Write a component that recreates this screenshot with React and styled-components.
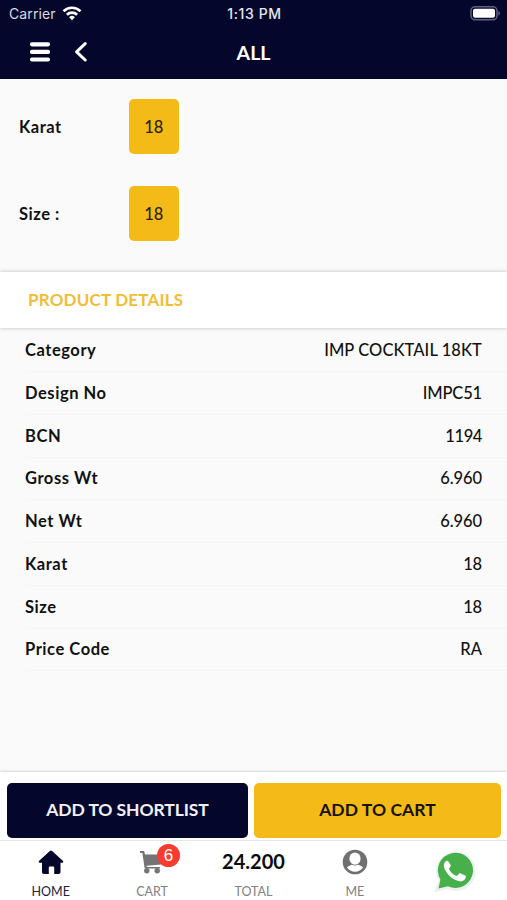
import React from 'react';
import styled, { createGlobalStyle } from 'styled-components';

const details = [
  { label: 'Category', value: 'IMP COCKTAIL 18KT', spacing: '0.08px' },
  { label: 'Design No', value: 'IMPC51', spacing: '-0.15px' },
  { label: 'BCN', value: '1194', spacing: '-0.4px' },
  { label: 'Gross Wt', value: '6.960', spacing: '-0.1px' },
  { label: 'Net Wt', value: '6.960', spacing: '-0.1px' },
  { label: 'Karat', value: '18', spacing: '-0.2px' },
  { label: 'Size', value: '18', spacing: '-0.2px' },
  { label: 'Price Code', value: 'RA' },
];

const options = [
  { label: 'Karat', value: '18' },
  { label: 'Size :', value: '18' },
];

const WifiIcon = () => (
  <svg width="20" height="15" viewBox="0 0 20 15" fill="none" stroke="#fff" strokeWidth="2.7">
    <path d="M1.5 5.2a12.2 12.2 0 0 1 17 0" />
    <path d="M4.9 8.7a7.3 7.3 0 0 1 10.2 0" />
    <path d="M10 14.2l-2.9-2.9a4.1 4.1 0 0 1 5.8 0z" fill="#fff" stroke="none" />
  </svg>
);

const BatteryIcon = () => (
  <svg width="31" height="15" viewBox="0 0 31 15">
    <rect x="1" y="0.8" width="26" height="13" rx="4" fill="none" stroke="#5f6180" strokeWidth="1.5" />
    <rect x="3" y="2.8" width="22" height="9" rx="2" fill="#fff" />
    <path d="M28.4 5v4.6c1-.4 1.6-1.3 1.6-2.3s-.6-1.9-1.6-2.3z" fill="#5f6180" />
  </svg>
);

const MenuIcon = () => (
  <svg width="20" height="21" viewBox="0 0 20 21" fill="#fff">
    <rect x="0" y="0.2" width="20" height="4.2" rx="1.8" />
    <rect x="0" y="7.8" width="20" height="4.2" rx="1.8" />
    <rect x="0" y="15.4" width="20" height="4.2" rx="1.8" />
  </svg>
);

const BackIcon = () => (
  <svg width="14" height="21" viewBox="0 0 14 21" fill="none" stroke="#fff" strokeWidth="3" strokeLinecap="round" strokeLinejoin="round">
    <path d="M11.2 1.6L2.6 9.8L11.2 18" />
  </svg>
);

const HomeIcon = () => (
  <svg width="26" height="25" viewBox="0 0 26 25" fill="#04072b">
    <path d="M11.9 1a1.7 1.7 0 0 1 2.2 0L24.8 10.7c.9.9.6 2-.5 2H22.500v9.300c0 1.300-.8 2-2 2h-4.300v-6.300c0-.8-.4-1.200-1.200-1.200h-3c-.8 0-1.200.4-1.200 1.200V24H6c-1.200 0-2-.7-2-2v-9.300H1.700c-1.100 0-1.400-1.100-.5-2z" />
  </svg>
);

const CartIcon = () => (
  <svg width="24" height="24" viewBox="0 0 24 24" fill="#747474">
    <path d="M0 1h3c.9 0 1.3.4 1.5 1.2L5 4.4h17.500L21 14.500 6.500 15.800l.4 1.200H20v1.500H5.600c-.6 0-1-.3-1.100-.9L2.400 3H0z" />
    <circle cx="6.8" cy="20.7" r="2.7" />
    <circle cx="17.2" cy="20.7" r="2.7" />
  </svg>
);

const ProfileIcon = () => (
  <svg width="26" height="26" viewBox="0 0 26 26">
    <circle cx="13" cy="13" r="12.3" fill="#707070" />
    <ellipse cx="13" cy="9.600" rx="5.600" ry="6.200" fill="#fff" />
    <path d="M4.900 18.200c1.600-1.300 3.200-2 5-2.500 1.900 1 4.300 1 6.200 0 1.800.5 3.400 1.200 5 2.500-1.900 2.900-4.700 4.500-8.100 4.500s-6.200-1.600-8.100-4.500z" fill="#fff" />
  </svg>
);

const WhatsappIcon = () => (
  <svg width="42" height="42" viewBox="0 0 42 42">
    <path d="M.5 41.500L4.300 29.500A19.800 19.800 0 1 1 13 38z" fill="#edf0f2" />
    <path d="M4.500 37.500L6.400 28.500A17.600 17.600 0 1 1 14 35.300z" fill="#48b04b" />
    <path d="M14.700 10.900c-.6-1-1.500-1.300-2.300-.8-3 1.700-3.200 5.200-1.400 8.700 3 5.800 7.700 9.700 13.400 11.300 3.700 1 6.600-.5 7.400-3.800.2-.9 0-1.400-.8-1.800l-4.200-2.100c-.9-.4-1.400-.3-2 .4l-1.300 1.600c-.4.5-.8.6-1.500.3-3-1.300-5.300-3.500-6.800-6.300-.3-.6-.2-.9.2-1.400l1.100-1.400c.4-.5.4-1 .1-1.600z" fill="#fff" />
  </svg>
);

const App = () => {
  return (
    <Screen>
      <GlobalStyle />
      <Header>
        <StatusBar>
          <Carrier>
            <span>Carrier</span>
            <WifiIcon />
          </Carrier>
          <Clock>1:13 PM</Clock>
          <Battery>
            <BatteryIcon />
          </Battery>
        </StatusBar>
        <NavBar>
          <NavActions>
            <IconButton aria-label="Menu"><MenuIcon /></IconButton>
            <IconButton aria-label="Back"><BackIcon /></IconButton>
          </NavActions>
          <Title>ALL</Title>
        </NavBar>
      </Header>

      <Content>
        <Options>
          {options.map((option) => (
            <OptionRow key={option.label}>
              <OptionLabel>{option.label}</OptionLabel>
              <OptionValue>{option.value}</OptionValue>
            </OptionRow>
          ))}
        </Options>

        <SectionTitle>PRODUCT DETAILS</SectionTitle>

        <DetailList>
          {details.map((item) => (
            <DetailRow key={item.label}>
              <DetailLabel>{item.label}</DetailLabel>
              <DetailValue $spacing={item.spacing}>{item.value}</DetailValue>
            </DetailRow>
          ))}
        </DetailList>
      </Content>

      <Actions>
        <ActionButton>ADD TO SHORTLIST</ActionButton>
        <ActionButton $accent>ADD TO CART</ActionButton>
      </Actions>

      <TabBar>
        <Tab $active>
          <TabIcon><HomeIcon /></TabIcon>
          <TabLabel>HOME</TabLabel>
        </Tab>
        <Tab>
          <TabIcon>
            <CartIcon />
            <Badge>6</Badge>
          </TabIcon>
          <TabLabel>CART</TabLabel>
        </Tab>
        <Tab>
          <Total>24.200</Total>
          <TabLabel>TOTAL</TabLabel>
        </Tab>
        <Tab>
          <TabIcon><ProfileIcon /></TabIcon>
          <TabLabel>ME</TabLabel>
        </Tab>
        <ChatTab>
          <WhatsappIcon />
        </ChatTab>
      </TabBar>
    </Screen>
  );
};

// Styled Components
const GlobalStyle = createGlobalStyle`
  * {
    box-sizing: border-box;
  }

  body {
    margin: 0;
    overflow: hidden;
  }

  svg {
    display: block;
    flex-shrink: 0;
  }
`;

const Screen = styled.div`
  width: 507px;
  height: 900px;
  display: flex;
  flex-direction: column;
  background-color: #fafafa;
  color: #111;
  font-family: Lato, sans-serif;
`;

const Header = styled.header`
  height: 79px;
  background-color: #04072b;
  color: #fff;
`;

const StatusBar = styled.div`
  height: 27px;
  padding: 0 6px 0 9px;
  display: grid;
  grid-template-columns: 1fr auto 1fr;
  align-items: center;
  font-family: Inter, sans-serif;
  font-size: 14px;
`;

const Carrier = styled.div`
  display: flex;
  align-items: center;
  gap: 6px;
  color: #d9dae2;
  letter-spacing: 0.1px;
`;

const Clock = styled.div`
  margin-left: -1px;
  font-size: 14px;
  font-weight: 500;
  letter-spacing: 0.6px;
  color: #e6e7ee;
`;

const Battery = styled.div`
  display: flex;
  justify-content: flex-end;
`;

const NavBar = styled.div`
  height: 52px;
  padding: 0 30px 2px;
  display: grid;
  grid-template-columns: 1fr auto 1fr;
  align-items: center;
`;

const NavActions = styled.div`
  display: flex;
  gap: 24px;
`;

const IconButton = styled.button`
  padding: 0;
  border: none;
  background: none;
`;

const Title = styled.h1`
  margin: 0;
  font-size: 19.5px;
  font-weight: 700;
`;

const Content = styled.main`
  flex: 1;
`;

const Options = styled.div`
  height: 193px;
  padding: 20px 19px 0;
  display: flex;
  flex-direction: column;
  gap: 32px;
`;

const OptionRow = styled.div`
  display: flex;
  align-items: center;
`;

const OptionLabel = styled.span`
  width: 110px;
  font-size: 16.5px;
  font-weight: 700;
  letter-spacing: 0.5px;
`;

const OptionValue = styled.button`
  width: 49.5px;
  height: 55px;
  padding: 0;
  border: none;
  border-radius: 5px;
  background-color: #f4ba18;
  color: #2b220a;
  font-family: inherit;
  font-size: 16.5px;
  font-weight: 500;
`;

const SectionTitle = styled.h2`
  height: 56px;
  margin: 0;
  padding: 0 0 2px 28px;
  display: flex;
  align-items: center;
  background-color: #fff;
  box-shadow: 0 0 4px rgba(0, 0, 0, 0.25);
  color: #f2bd35;
  font-size: 17px;
  font-weight: 700;
  letter-spacing: 0.2px;
`;

const DetailList = styled.div`
  padding: 1.3px 0 0 25px;
`;

const DetailRow = styled.div`
  height: 42.75px;
  padding-right: 25px;
  display: flex;
  align-items: center;
  justify-content: space-between;
  border-bottom: 1px solid #f6f6f6;
`;

const DetailLabel = styled.span`
  font-size: 16.5px;
  font-weight: 700;
  letter-spacing: 0.55px;
`;

const DetailValue = styled.span`
  font-size: 16.5px;
  font-weight: 500;
  letter-spacing: ${props => props.$spacing || 'normal'};
`;

const Actions = styled.div`
  height: 68px;
  padding: 11px 6px 0 7px;
  display: flex;
  gap: 6px;
  background-color: #fff;
  box-shadow: 0 0 3px rgba(0, 0, 0, 0.25);
`;

const ActionButton = styled.button`
  flex: ${props => props.$accent ? '0 0 247px' : '0 0 241px'};
  height: 55px;
  padding: 0 0 2px;
  border: none;
  border-radius: 5px;
  background-color: ${props => props.$accent ? '#f4ba18' : '#04072b'};
  color: ${props => props.$accent ? '#171204' : '#f0f0fa'};
  font-family: inherit;
  font-size: 17.5px;
  font-weight: 700;
  letter-spacing: ${props => props.$accent ? '0.05px' : '-0.1px'};
`;

const TabBar = styled.nav`
  height: 60px;
  display: grid;
  grid-template-columns: repeat(5, 1fr);
  border-top: 1px solid #e6e6e6;
  background-color: #fff;
`;

const Tab = styled.div`
  padding-top: 8px;
  display: flex;
  flex-direction: column;
  align-items: center;
  color: ${props => props.$active ? '#20223f' : '#808080'};
`;

const ChatTab = styled(Tab)`
  padding: 10px 2px 0 0;
`;

const TabIcon = styled.div`
  position: relative;
  height: 26px;
  display: flex;
  align-items: center;
`;

const Badge = styled.span`
  position: absolute;
  top: -5px;
  left: 17px;
  width: 23px;
  height: 23px;
  display: flex;
  align-items: center;
  justify-content: center;
  border-radius: 50%;
  background-color: #fa3b30;
  color: #fff;
  font-family: "Liberation Sans", sans-serif;
  font-size: 17px;
`;

const Total = styled.div`
  height: 26px;
  color: #0c0c0c;
  font-size: 20px;
  font-weight: 700;
  line-height: 24px;
`;

const TabLabel = styled.span`
  margin-top: 9px;
  font-size: 12.5px;
  line-height: 16px;
`;

export default App;
